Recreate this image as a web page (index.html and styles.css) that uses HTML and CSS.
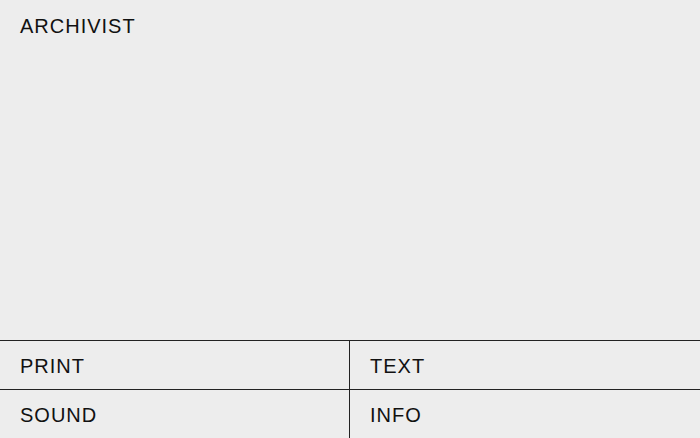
FILE: index.html
```html
<!DOCTYPE html>
<html lang="en">
<head>
    <meta charset="UTF-8">
    <meta name="viewport" content="width=device-width, initial-scale=1.0">
    <title>Archivist</title>
    <link rel="stylesheet" href="styles.css">
</head>
<body>

<div class="header">ARCHIVIST</div>

<div class="menu">
    <a class="menu-item" href="#print">PRINT</a>
    <a class="menu-item" href="#text">TEXT</a>
    <a class="menu-item" href="#sound">SOUND</a>
    <a class="menu-item" href="#info">INFO</a>
</div>

</body>
</html>
```

FILE: styles.css
```css
html, body {
    height: 100%;
}
body {
    margin: 0;
    display: flex;
    flex-direction: column;
    background-color: #ededed;
    color: #111;
    font-family: "Liberation Sans", Arial, sans-serif;
    font-size: 20px;
    letter-spacing: 1px;
}
.header {
    flex: 1;
    padding: 15px 20px;
}
.menu {
    display: grid;
    grid-template-columns: 350px 1fr;
    border-top: 1px solid #222;
}
.menu-item {
    display: block;
    height: 48px;
    line-height: 50px;
    padding: 0 20px;
    color: inherit;
    text-decoration: none;
}
.menu-item:nth-child(odd) {
    border-right: 1px solid #222;
}
.menu-item:nth-child(-n+2) {
    border-bottom: 1px solid #222;
}
```
